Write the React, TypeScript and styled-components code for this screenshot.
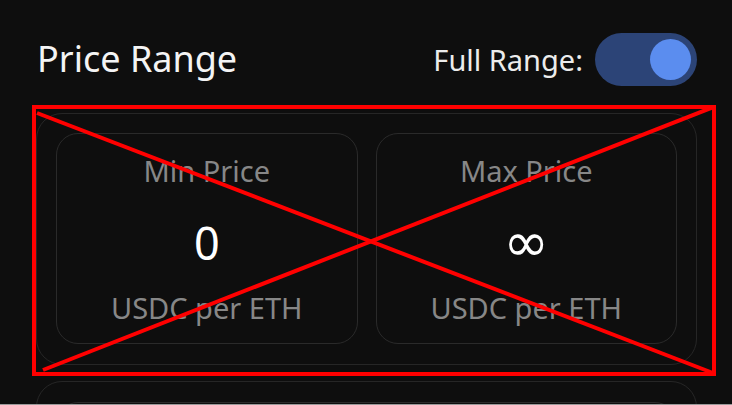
import React, { useState } from "react";
import styled, { createGlobalStyle } from "styled-components";

const GlobalStyle = createGlobalStyle`
  html {
    background: #9a9a9a;
    height: 405px;
    overflow: hidden;
  }
  body {
    margin: 0;
    height: 404px;
    overflow: hidden;
    background: #0e0e0e;
    font-family: "Noto Sans", "Open Sans", sans-serif;
    color: #f2f2f2;
  }
`;

const Page = styled.div`
  display: flex;
  flex-direction: column;
  padding: 33px 35px 0 36px;
  gap: 16px;
`;

const Header = styled.div`
  display: flex;
  align-items: center;
  justify-content: space-between;
  height: 52px;
  margin-bottom: 12px;
`;

const Title = styled.h2`
  margin: 0 0 0 1px;
  font-size: 36px;
  font-weight: 400;
  line-height: 1;
  color: #f4f4f4;
`;

const ToggleWrap = styled.label`
  display: flex;
  align-items: center;
  gap: 12px;
  font-size: 29px;
  font-weight: 400;
  color: #ececec;
  cursor: pointer;
`;

const Track = styled.button<{ $on: boolean }>`
  display: flex;
  align-items: center;
  justify-content: ${({ $on }) => ($on ? "flex-end" : "flex-start")};
  width: 102px;
  height: 53px;
  padding: 0 6px;
  border: none;
  border-radius: 27px;
  background: ${({ $on }) => ($on ? "#2c4477" : "#333")};
  cursor: pointer;
`;

const Knob = styled.span`
  width: 41px;
  height: 41px;
  border-radius: 50%;
  background: #5b8def;
`;

const Section = styled.div`
  position: relative;
`;

const OuterCard = styled.div`
  display: grid;
  grid-template-columns: 1fr 1fr;
  gap: 18px;
  padding: 19px 19px 20px 19px;
  border: 1px solid #262626;
  border-radius: 26px;
`;

const PriceCard = styled.div`
  display: flex;
  flex-direction: column;
  align-items: center;
  height: 211px;
  box-sizing: border-box;
  padding-top: 18px;
  border: 1px solid #2a2a2a;
  border-radius: 22px;
`;

const Label = styled.div`
  font-size: 29px;
  line-height: 38px;
  color: #878787;
`;

const Value = styled.div<{ $symbol?: boolean }>`
  margin-top: 22px;
  height: 61px;
  font-family: ${({ $symbol }) => ($symbol ? '"DejaVu Sans", sans-serif' : "inherit")};
  font-size: ${({ $symbol }) => ($symbol ? "55px" : "45px")};
  font-weight: 400;
  line-height: 61px;
  color: #ffffff;
`;

const Unit = styled.div`
  margin-top: 15px;
  font-size: 29px;
  line-height: 39px;
  color: #878787;
`;

const Cross = styled.svg`
  position: absolute;
  left: -4px;
  top: -8px;
  pointer-events: none;
`;

const NextCard = styled.div`
  height: 120px;
  padding: 20px 19px;
  border: 1px solid #262626;
  border-radius: 26px;
`;

const NextInner = styled.div`
  height: 100px;
  border: 1px solid #2a2a2a;
  border-radius: 22px;
`;

const PriceBox = ({ label, value, symbol }: { label: string; value: string; symbol?: boolean }) => (
  <PriceCard>
    <Label>{label}</Label>
    <Value $symbol={symbol}>{value}</Value>
    <Unit>USDC per ETH</Unit>
  </PriceCard>
);

const App = () => {
  const [fullRange, setFullRange] = useState(true);

  return (
    <Page>
      <GlobalStyle />
      <Header>
        <Title>Price Range</Title>
        <ToggleWrap>
          Full Range:
          <Track $on={fullRange} onClick={() => setFullRange(!fullRange)}>
            <Knob />
          </Track>
        </ToggleWrap>
      </Header>
      <Section>
        <OuterCard>
          <PriceBox label="Min Price" value="0" />
          <PriceBox label="Max Price" value="∞" symbol />
        </OuterCard>
        {fullRange && (
          <Cross width="684" height="272" viewBox="0 0 684 272">
            <rect x="2" y="2" width="680" height="267" fill="none" stroke="#ff0000" strokeWidth="4" />
            <line x1="5" y1="8" x2="681" y2="268" stroke="#ff0000" strokeWidth="4" />
            <line x1="684" y1="1" x2="11" y2="265" stroke="#ff0000" strokeWidth="4" />
          </Cross>
        )}
      </Section>
      <NextCard>
        <NextInner />
      </NextCard>
    </Page>
  );
};

export default App;
